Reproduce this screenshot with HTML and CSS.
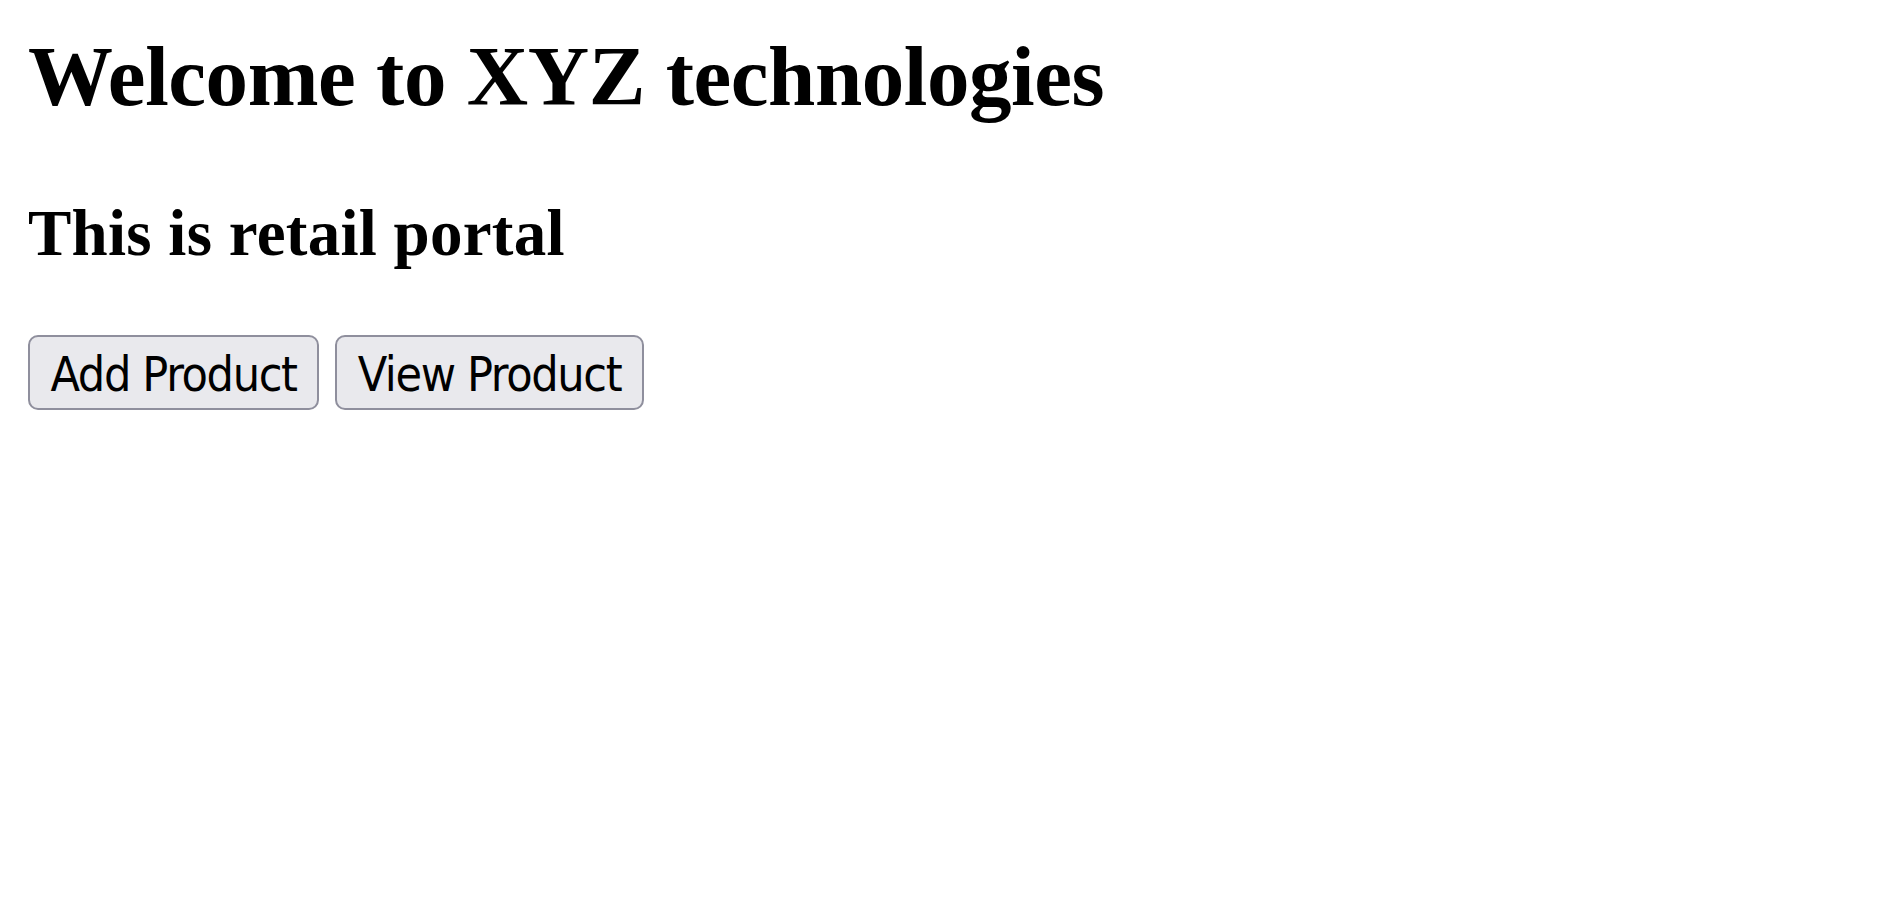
FILE: index.html
```html
<!DOCTYPE html>
<html lang="en">
<head>
<meta charset="utf-8">
<title>XYZ technologies</title>
<link rel="stylesheet" href="styles.css">
</head>
<body>
<main class="page">
  <h1 class="title">Welcome to XYZ technologies</h1>
  <h2 class="subtitle">This is retail portal</h2>
  <div class="actions">
    <button class="btn" type="button">Add Product</button>
    <button class="btn" type="button">View Product</button>
  </div>
</main>
</body>
</html>
```

FILE: styles.css
```css
html, body {
  margin: 0;
  padding: 0;
  background: #ffffff;
}

.page {
  padding: 0 0 0 28px;
  font-family: "Liberation Serif", "Times New Roman", serif;
  color: #000;
}

.title {
  margin: 27px 0 0;
  font-size: 85px;
  line-height: 98px;
  font-weight: bold;
  letter-spacing: -0.45px;
}

.subtitle {
  margin: 71px 0 0;
  font-size: 65px;
  line-height: 74px;
  font-weight: bold;
  letter-spacing: 0.25px;
}

.actions {
  display: flex;
  gap: 16px;
  margin-top: 65px;
}

.btn {
  box-sizing: border-box;
  height: 75px;
  padding: 3px 20.5px 0;
  font-family: "DejaVu Sans Condensed", "DejaVu Sans", sans-serif;
  font-stretch: condensed;
  font-size: 48px;
  letter-spacing: -1.35px;
  color: #000;
  background: #e9e9ed;
  border: 2.5px solid #8f8f9d;
  border-radius: 10px;
  line-height: 1;
}
```
